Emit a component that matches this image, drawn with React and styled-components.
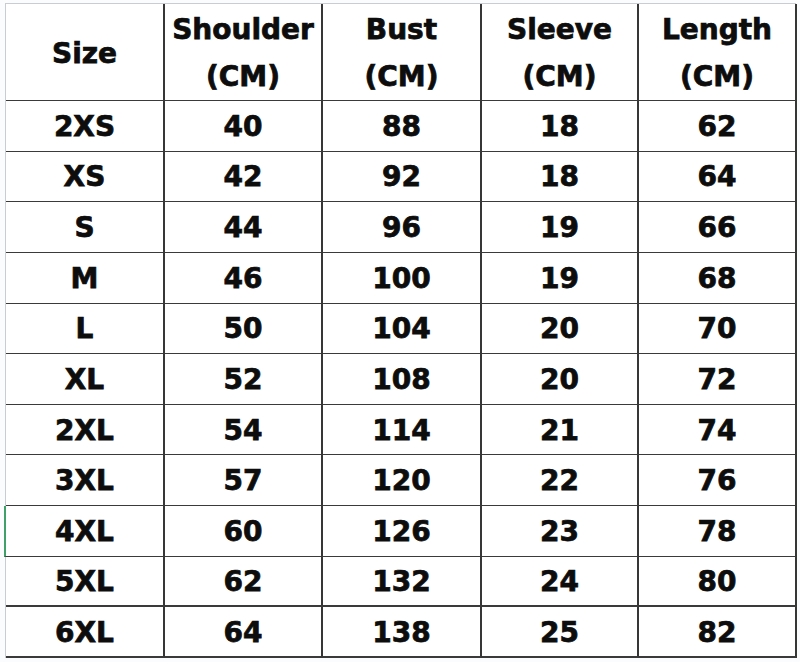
import React from "react";
import styled, { createGlobalStyle } from "styled-components";

const Global = createGlobalStyle`
  html, body {
    margin: 0;
    padding: 0;
    background: #ffffff;
  }
  body {
    font-family: "DejaVu Sans", "Liberation Sans", sans-serif;
  }
`;

const Page = styled.div`
  width: 800px;
  height: 662px;
  box-sizing: border-box;
  padding: 3px 0 0 5px;
  background: #fbfcfd;
  overflow: hidden;
`;

const Sheet = styled.div`
  display: grid;
  grid-template-columns: 159px 158px 159px 157px 158px;
  grid-template-rows: 97px repeat(11, 50.64px);
  width: 791px;
  background: #ffffff;
  border-top: 1px solid #c9ccd0;
  border-left: 1px solid #c9ccd0;
  box-sizing: border-box;
`;

const Cell = styled.div`
  box-sizing: border-box;
  display: flex;
  flex-direction: column;
  align-items: center;
  justify-content: center;
  padding-top: 2px;
  border-right: 2px solid #363636;
  border-bottom: ${(p) => (p.$thick ? "2px" : "1px")} solid #3a3a3a;
  border-left: ${(p) => (p.$marked ? "2px solid #3fa06a" : "none")};
  margin-left: ${(p) => (p.$marked ? "-2px" : "0")};
  font-weight: 700;
  font-size: 28px;
  color: #0d0d0d;
  -webkit-text-stroke: 0.75px #0d0d0d;
  line-height: 1;
  text-align: center;
`;

const HeadLine = styled.span`
  display: block;
  line-height: 47px;
`;

const headers = [
  ["Size"],
  ["Shoulder", "(CM)"],
  ["Bust", "(CM)"],
  ["Sleeve", "(CM)"],
  ["Length", "(CM)"],
];

const rows = [
  ["2XS", 40, 88, 18, 62],
  ["XS", 42, 92, 18, 64],
  ["S", 44, 96, 19, 66],
  ["M", 46, 100, 19, 68],
  ["L", 50, 104, 20, 70],
  ["XL", 52, 108, 20, 72],
  ["2XL", 54, 114, 21, 74],
  ["3XL", 57, 120, 22, 76],
  ["4XL", 60, 126, 23, 78],
  ["5XL", 62, 132, 24, 80],
  ["6XL", 64, 138, 25, 82],
];

export default function App() {
  return (
    <>
      <Global />
      <Page>
        <Sheet>
          {headers.map((h, i) => (
            <Cell key={"h" + i}>
              {h.map((line) => (
                <HeadLine key={line}>{line}</HeadLine>
              ))}
            </Cell>
          ))}
          {rows.map((r, ri) =>
            r.map((v, ci) => (
              <Cell
                key={ri + "-" + ci}
                $thick={ri === 9 || ri === 10}
                $marked={ri === 8 && ci === 0}
              >
                {v}
              </Cell>
            ))
          )}
        </Sheet>
      </Page>
    </>
  );
}
